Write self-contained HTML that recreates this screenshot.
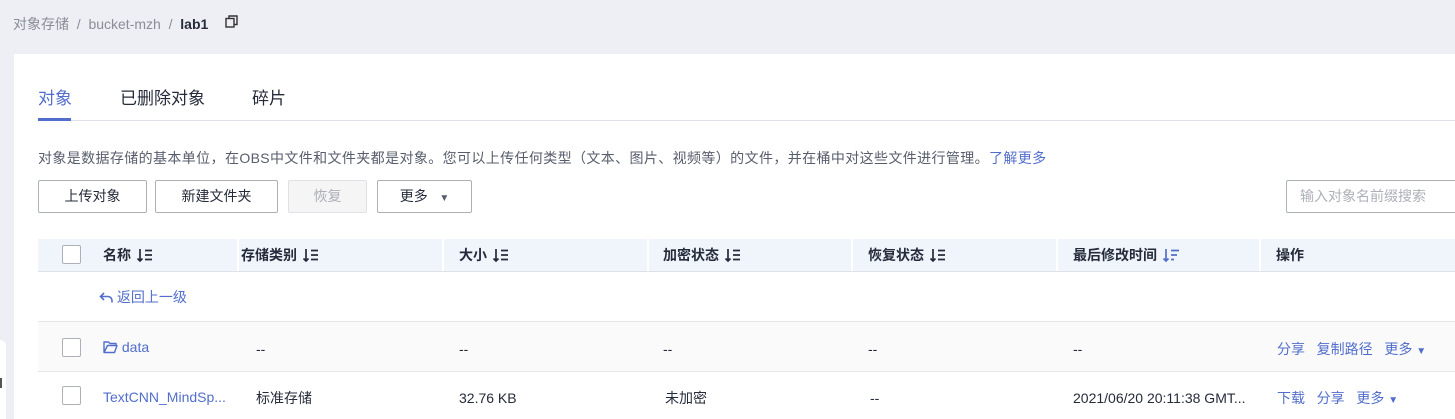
<!DOCTYPE html>
<html><head><meta charset="utf-8"><style>
*{margin:0;padding:0;box-sizing:border-box}
body{width:1455px;height:419px;overflow:hidden;background:#eeeff4;font-family:"Liberation Sans","Noto Sans CJK SC",sans-serif;font-size:14px;color:#252b3a;position:relative}
.a{position:absolute;white-space:nowrap;line-height:20px}
.card{position:absolute;left:14px;top:54px;width:1441px;height:365px;background:#fff}
.btn{position:absolute;top:180px;height:33px;border:1px solid #adb0b8;border-radius:2px;background:#fff;font-size:14px;text-align:center;line-height:31px;color:#252b3a}
.hd{position:absolute;top:239px;left:38px;width:1417px;height:33px;background:#f0f4fb;border-bottom:1px solid #dfe1e6}
.sep{position:absolute;top:239px;width:2px;height:32px;background:#fff}
.th{position:absolute;top:245px;font-weight:bold;font-size:14px;line-height:20px;color:#252b3a;white-space:nowrap}
.cb{position:absolute;left:62px;width:19px;height:19px;border:1px solid #adb0b8;border-radius:2px;background:#fff}
.link{color:#526ecc}
.line{position:absolute;left:38px;width:1417px;height:1px;background:#e4e6eb}
.s{display:inline-block;vertical-align:-2px;margin-left:6px}
</style></head><body>
<div class="a" style="left:13px;top:14px;color:#8a8e99;font-size:14px">对象存储 &nbsp;/&nbsp; bucket-mzh &nbsp;/&nbsp; <b style="color:#252b3a">lab1</b></div>
<svg class="a" style="left:225px;top:15px" width="13" height="13" viewBox="0 0 13 13"><rect x="1" y="3.5" width="8" height="8.5" fill="none" stroke="#333" stroke-width="1.4"/><path d="M4 3.5V1h8v8.5h-3" fill="none" stroke="#333" stroke-width="1.4"/></svg>
<div class="card"></div>
<div class="a" style="left:0;top:340px;width:6px;height:79px;background:#fff;border-radius:0 6px 0 0"></div>
<div class="a" style="left:0;top:378px;width:2px;height:10px;background:#555"></div>
<div class="a" style="left:38px;top:88px;font-size:17px;line-height:22px;color:#526ecc">对象</div>
<div class="a" style="left:120px;top:88px;font-size:17px;line-height:22px;color:#252b3a">已删除对象</div>
<div class="a" style="left:252px;top:88px;font-size:17px;line-height:22px;color:#252b3a">碎片</div>
<div class="a" style="left:38px;top:120px;width:1417px;height:1px;background:#dfe1e6"></div>
<div class="a" style="left:38px;top:118px;width:33px;height:3px;background:#526ecc"></div>
<div class="a" style="left:38px;top:148px;font-size:14px;letter-spacing:0.38px;color:#575d6c">对象是数据存储的基本单位，在OBS中文件和文件夹都是对象。您可以上传任何类型（文本、图片、视频等）的文件，并在桶中对这些文件进行管理。<span class="link">了解更多</span></div>
<div class="btn" style="left:38px;width:109px">上传对象</div>
<div class="btn" style="left:155px;width:123px">新建文件夹</div>
<div class="btn" style="left:288px;width:79px;background:#f5f5f6;border-color:#dfe1e6;color:#adb0b8">恢复</div>
<div class="btn" style="left:377px;width:95px">更多 &nbsp;&nbsp;<span style="font-size:10px;color:#575d6c">▼</span></div>
<div class="btn" style="left:1286px;width:175px;text-align:left;padding-left:13px;color:#adb0b8">输入对象名前缀搜索</div>
<div class="hd"></div>
<div class="sep" style="left:237px"></div><div class="sep" style="left:442px"></div><div class="sep" style="left:647px"></div><div class="sep" style="left:851px"></div><div class="sep" style="left:1056px"></div><div class="sep" style="left:1259px"></div>
<div class="cb" style="top:245px"></div>
<svg width="0" height="0" style="position:absolute"><defs><g id="so"><path d="M3 1v12M0.5 10.5L3 13l2.5-2.5M8 2.5h7M8 7h7M8 11.5h7" fill="none" stroke-width="1.7"/></g></defs></svg>
<div class="th" style="left:103px">名称<svg class="s" width="16" height="14"><use href="#so" stroke="#252b3a"/></svg></div>
<div class="th" style="left:241px">存储类别<svg class="s" width="16" height="14"><use href="#so" stroke="#252b3a"/></svg></div>
<div class="th" style="left:459px">大小<svg class="s" width="16" height="14"><use href="#so" stroke="#252b3a"/></svg></div>
<div class="th" style="left:663px">加密状态<svg class="s" width="16" height="14"><use href="#so" stroke="#252b3a"/></svg></div>
<div class="th" style="left:868px">恢复状态<svg class="s" width="16" height="14"><use href="#so" stroke="#252b3a"/></svg></div>
<div class="th" style="left:1073px">最后修改时间<svg class="s" width="16" height="14"><path d="M3 1v12M0.5 10.5L3 13l2.5-2.5M8 2.5h8M8 7h6M8 11.5h3" fill="none" stroke="#526ecc" stroke-width="1.7"/></svg></div>
<div class="th" style="left:1276px">操作</div>
<div class="a link" style="left:99px;top:287px"><svg width="14" height="11" style="vertical-align:-1px"><path d="M5 1L1.5 4.5 5 8M1.5 4.5H9a4 4 0 0 1 4 4v2" fill="none" stroke="#526ecc" stroke-width="1.6"/></svg> 返回上一级</div>
<div class="line" style="top:321px"></div>
<div class="a" style="left:38px;top:322px;width:1417px;height:49px;background:#fafafa"></div>
<div class="line" style="top:371px"></div>
<div class="cb" style="top:338px"></div>
<div class="a link" style="left:103px;top:337px"><svg width="15" height="14" style="vertical-align:-2px"><path d="M1 2h4.5l1.5 1.5h6v2H4.5L1 12.5V2zM1 12.5h10.5l2.5-7H4.5" fill="none" stroke="#526ecc" stroke-width="1.4" stroke-linejoin="round"/></svg> data</div>
<div class="a" style="left:256px;top:339px">--</div><div class="a" style="left:459px;top:339px">--</div><div class="a" style="left:663px;top:339px">--</div><div class="a" style="left:868px;top:339px">--</div><div class="a" style="left:1073px;top:339px">--</div>
<div class="a link" style="left:1277px;top:339px">分享 &nbsp; 复制路径 &nbsp; 更多 <span style="font-size:10px">▼</span></div>
<div class="cb" style="top:386px"></div>
<div class="a link" style="left:103px;top:387px">TextCNN_MindSp...</div>
<div class="a" style="left:256px;top:388px">标准存储</div>
<div class="a" style="left:459px;top:388px">32.76 KB</div>
<div class="a" style="left:665px;top:388px">未加密</div>
<div class="a" style="left:870px;top:388px">--</div>
<div class="a" style="left:1073px;top:388px">2021/06/20 20:11:38 GMT...</div>
<div class="a link" style="left:1277px;top:388px">下载 &nbsp; 分享 &nbsp; 更多 <span style="font-size:10px">▼</span></div>
</body></html>
